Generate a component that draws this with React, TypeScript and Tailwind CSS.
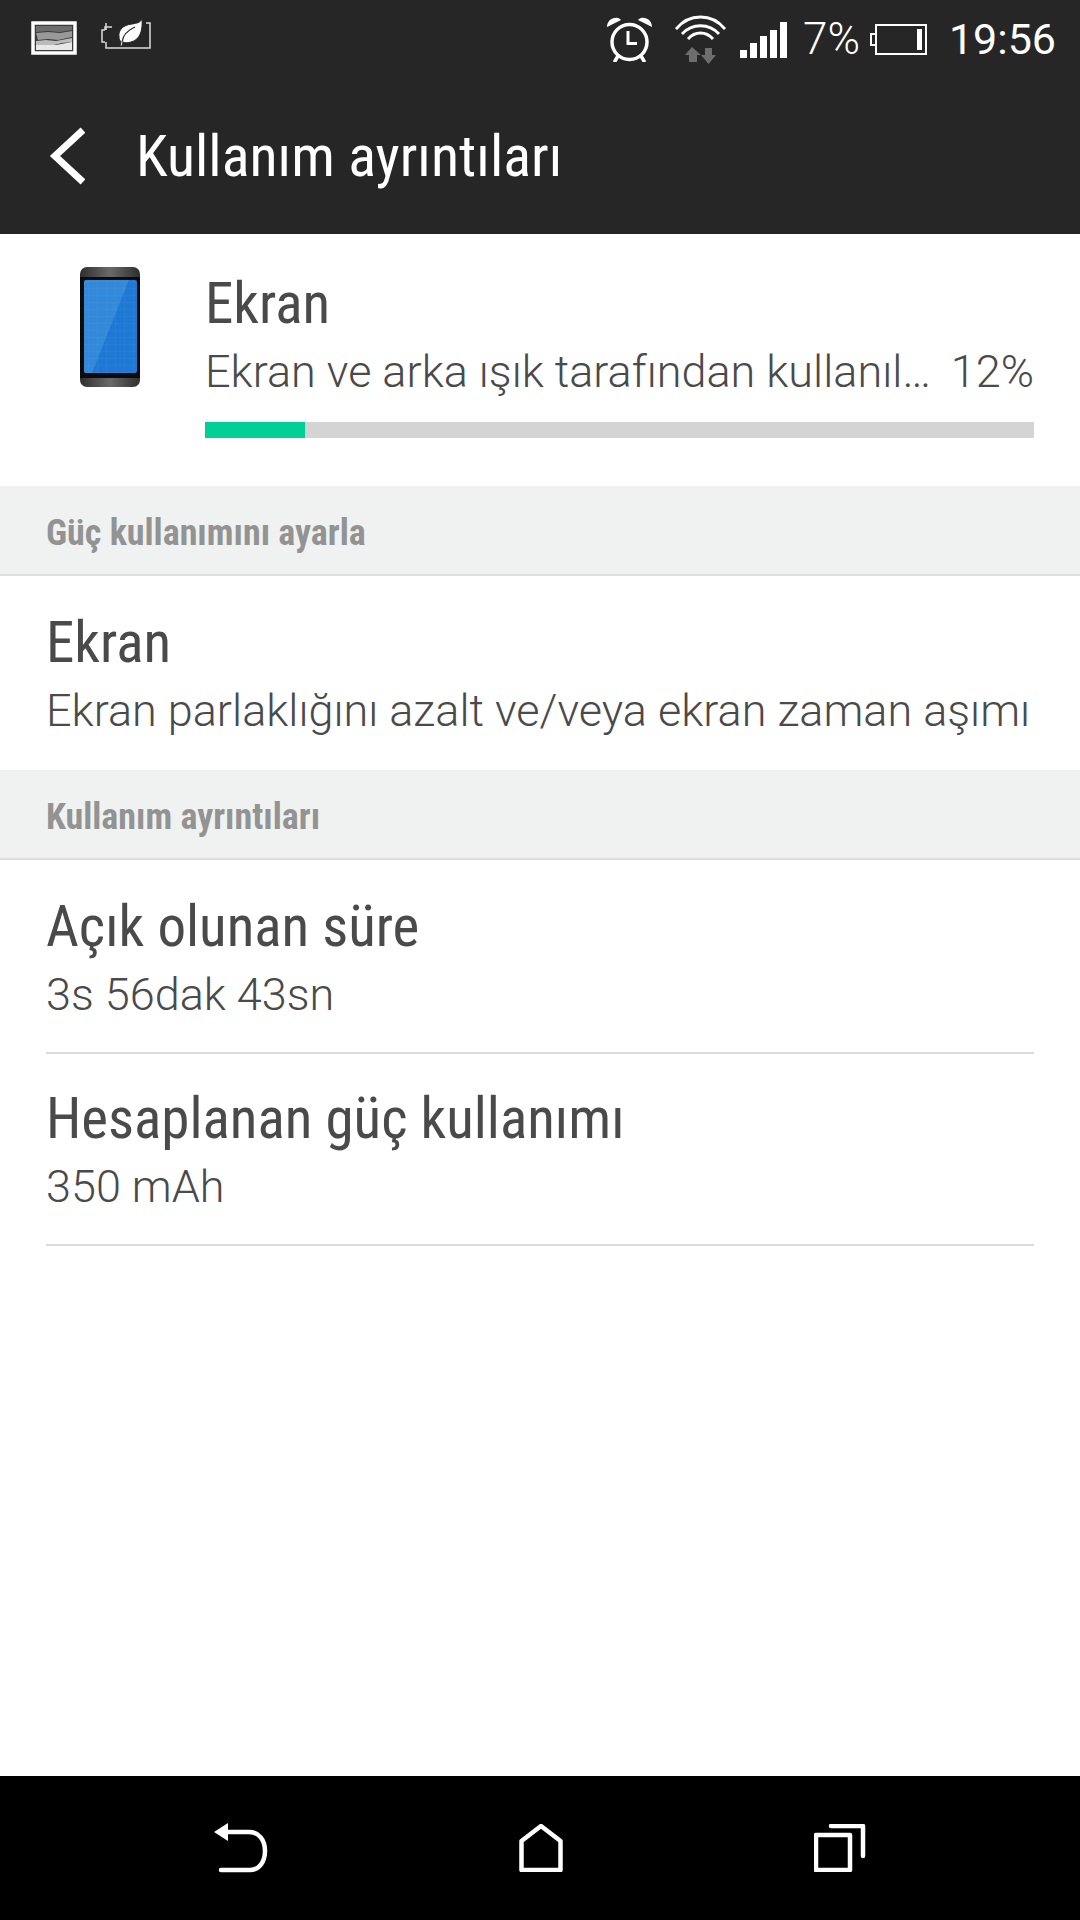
const titleFont = "font-['Roboto',sans-serif]"

function PhotoIcon() {
  return (
    <svg width="46" height="34" viewBox="0 0 46 34" className="mt-[-2px]">
      <rect x="2" y="2" width="42" height="30" fill="#3a3a3a" stroke="#fff" strokeWidth="3.5" />
      <path d="M5 5h36v4l-12 2-12-1-12 1z" fill="#6e6e6e" />
      <path d="M5 12l12-1 12 1 12-2v6l-14 3-10-1-10 1z" fill="#999" />
      <path d="M5 20l10-1 10 1 16-3v4l-10 1-8 2H5z" fill="#bbb" />
      <path d="M5 24h20l16-3v8H5z" fill="#e8e8e8" />
    </svg>
  )
}

function SaverIcon() {
  return (
    <svg width="50" height="30" viewBox="0 0 50 30" className="mt-[-10px]">
      <path d="M4 11V8h7M4 11H1v12h3M5 23v6h44V4h-4" fill="none" stroke="#ddd" strokeWidth="1.5" />
      <path d="M5 4v7" stroke="#ddd" strokeWidth="1.5" />
      <path d="M41 0c-2 4-5 4-10 5-9 1-14 6-13 13 0 2 1 4 2 5l-1 4h2l1-4c2 1 5 1 8 0 9-2 12-12 11-23z" fill="#fff" stroke="#262626" strokeWidth="1" />
      <path d="M21 23c1-7 6-12 13-15" fill="none" stroke="#262626" strokeWidth="1.2" />
    </svg>
  )
}

function AlarmIcon() {
  return (
    <svg width="45" height="45" viewBox="0 0 45 45" fill="none" stroke="#fff">
      <circle cx="22.5" cy="25" r="17.5" strokeWidth="3.5" />
      <path d="M21 14v12.5h9" strokeWidth="3" />
      <path d="M0 10C0 4 5 0 11 1c1 0 2 1 3 2z" fill="#fff" stroke="none" />
      <path d="M45 10C45 4 40 0 34 1c-1 0-2 1-3 2z" fill="#fff" stroke="none" />
      <path d="M11 39l-3 5M34 39l3 5" strokeWidth="3.5" strokeLinecap="round" />
    </svg>
  )
}

function WifiIcon() {
  return (
    <svg width="51" height="49" viewBox="0 0 51 49">
      <g fill="none" stroke="#fff" strokeWidth="2.8">
        <path d="M1 14C14 -2 37 -2 50 14" />
        <path d="M7 19C17 8 34 8 44 19" />
        <path d="M13 24C20 16 31 16 38 24" />
      </g>
      <path d="M17 32l-7 8h4v7h8v-7h4z" fill="#6e6e6e" />
      <path d="M30 33v7h-4l7.5 9 7.5-9h-4v-7z" fill="#6e6e6e" />
    </svg>
  )
}

function SignalIcon() {
  return (
    <svg width="47" height="36" viewBox="0 0 47 36" fill="#fff">
      <rect x="0" y="28" width="7" height="8" />
      <rect x="10" y="21" width="7" height="15" />
      <rect x="20" y="14" width="7" height="22" />
      <rect x="30" y="8" width="7" height="28" />
      <rect x="40" y="0" width="7" height="36" />
    </svg>
  )
}

function BatteryIcon() {
  return (
    <svg width="57" height="31" viewBox="0 0 57 31">
      <path d="M6 10H1v11h5M6 1h50v29H6z" fill="none" stroke="#fff" strokeWidth="2" />
      <rect x="47" y="5" width="5" height="21" fill="#fff" />
    </svg>
  )
}

function PhoneIcon() {
  return (
    <svg width="62" height="122" viewBox="0 0 62 122" className="mt-[33px]">
      <defs>
        <linearGradient id="bezel" x1="0" x2="1" y1="0" y2="0">
          <stop offset="0" stopColor="#2e2e2e" />
          <stop offset="0.5" stopColor="#6a6a6a" />
          <stop offset="1" stopColor="#2e2e2e" />
        </linearGradient>
        <pattern id="cells" width="9" height="7" patternUnits="userSpaceOnUse">
          <path d="M0 0h9M0 0v7" stroke="#fff" strokeOpacity="0.07" strokeWidth="1" />
        </pattern>
      </defs>
      <rect x="1" y="0" width="60" height="120" rx="7" fill="url(#bezel)" />
      <rect x="1" y="10" width="60" height="101" fill="#0b0b0b" />
      <rect x="5" y="13" width="53" height="93" rx="2" fill="#1e78d4" />
      <path d="M5 15c0-1 1-2 2-2h43L13 106H7c-1 0-2-1-2-2z" fill="#3389da" />
      <rect x="5" y="13" width="53" height="93" rx="2" fill="url(#cells)" />
    </svg>
  )
}

function SectionHeader({ title }: { title: string }) {
  return (
    <div className="flex h-[90px] items-center border-b-2 border-[#dcdfde] bg-[#f0f2f1] px-[46px] pt-[6px]">
      <span className={`${titleFont} text-[36px] font-bold text-[#939393] [font-stretch:75%]`}>{title}</span>
    </div>
  )
}

function TwoLine({ title, sub, height, top }: { title: string; sub: string; height: string; top: string }) {
  return (
    <div className={`flex flex-col ${height}`}>
      <span className={`${titleFont} ${top} text-[57px] leading-[62px] text-[#4a4a4a] [font-stretch:75%]`}>{title}</span>
      <span className={`${titleFont} mt-[12px] text-[45px] leading-[50px] font-light text-[#4a4a4a]`}>{sub}</span>
    </div>
  )
}

export default function App() {
  return (
    <div className="flex h-[1920px] w-[1080px] flex-col overflow-hidden bg-white">
      <div className="h-[234px] shrink-0 bg-[#262626]">
        <div className="flex h-[78px] items-center justify-between pl-[31px] pr-[24px]">
          <div className="flex items-center gap-[24px]">
            <PhotoIcon />
            <SaverIcon />
          </div>
          <div className="flex items-center">
            <AlarmIcon />
            <div className="ml-[23px]"><WifiIcon /></div>
            <div className="ml-[14px] mt-[1px]"><SignalIcon /></div>
            <span className={`${titleFont} ml-[16px] text-[44px] font-light text-white`}>7%</span>
            <div className="ml-[10px]"><BatteryIcon /></div>
            <span className={`${titleFont} ml-[22px] text-[43px] text-white`}>19:56</span>
          </div>
        </div>
        <div className="flex h-[156px] items-center pl-[49px]">
          <svg width="36" height="58" viewBox="0 0 36 58" fill="none" stroke="#fff" strokeWidth="7">
            <path d="M34 3L6 29l28 26" />
          </svg>
          <span className={`${titleFont} ml-[51px] text-[58px] text-white [font-stretch:75%]`}>Kullanım ayrıntıları</span>
        </div>
      </div>

      <div className="flex h-[252px] shrink-0 pl-[79px] pr-[46px]">
        <PhoneIcon />
        <div className="ml-[64px] flex flex-1 flex-col">
          <span className={`${titleFont} mt-[39px] text-[57px] leading-[62px] text-[#4a4a4a] [font-stretch:75%]`}>Ekran</span>
          <div className="mt-[12px] flex justify-between">
            <span className={`${titleFont} text-[45px] leading-[50px] font-light text-[#4a4a4a]`}>Ekran ve arka ışık tarafından kullanıl…</span>
            <span className={`${titleFont} text-[45px] leading-[50px] font-light text-[#4a4a4a]`}>12%</span>
          </div>
          <div className="mt-[25px] h-[16px] bg-[#d4d4d4]">
            <div className="h-full w-[100px] bg-[#00cf96]" />
          </div>
        </div>
      </div>

      <SectionHeader title="Güç kullanımını ayarla" />
      <div className="px-[46px]">
        <TwoLine title="Ekran" sub="Ekran parlaklığını azalt ve/veya ekran zaman aşımı" height="h-[194px]" top="mt-[36px]" />
      </div>
      <SectionHeader title="Kullanım ayrıntıları" />
      <div className="px-[46px]">
        <div className="border-b-2 border-[#dcdcdc]">
          <TwoLine title="Açık olunan süre" sub="3s 56dak 43sn" height="h-[192px]" top="mt-[36px]" />
        </div>
        <div className="border-b-2 border-[#dcdcdc]">
          <TwoLine title="Hesaplanan güç kullanımı" sub="350 mAh" height="h-[190px]" top="mt-[34px]" />
        </div>
      </div>

      <div className="mt-auto flex h-[144px] shrink-0 items-center justify-between bg-black pl-[214px] pr-[214px]">
        <svg width="54" height="50" viewBox="0 0 54 50" fill="none" stroke="#fff" strokeWidth="4.5" strokeLinecap="round">
          <path d="M14 9h21c10 0 16 8 16 19 0 11-6 19-15 19H7" />
          <path d="M0 9L14 0v18z" fill="#fff" stroke="none" />
        </svg>
        <svg width="44" height="48" viewBox="0 0 44 48" fill="none" stroke="#fff" strokeWidth="4.5" strokeLinejoin="round">
          <path d="M2.5 17L22 2l19.5 15v29h-39z" />
        </svg>
        <svg width="52" height="48" viewBox="0 0 52 48" fill="none" stroke="#fff" strokeWidth="4.5" strokeLinejoin="round" strokeLinecap="round">
          <rect x="2" y="11" width="34" height="35" />
          <path d="M17 2h32v30" />
        </svg>
      </div>
    </div>
  )
}
